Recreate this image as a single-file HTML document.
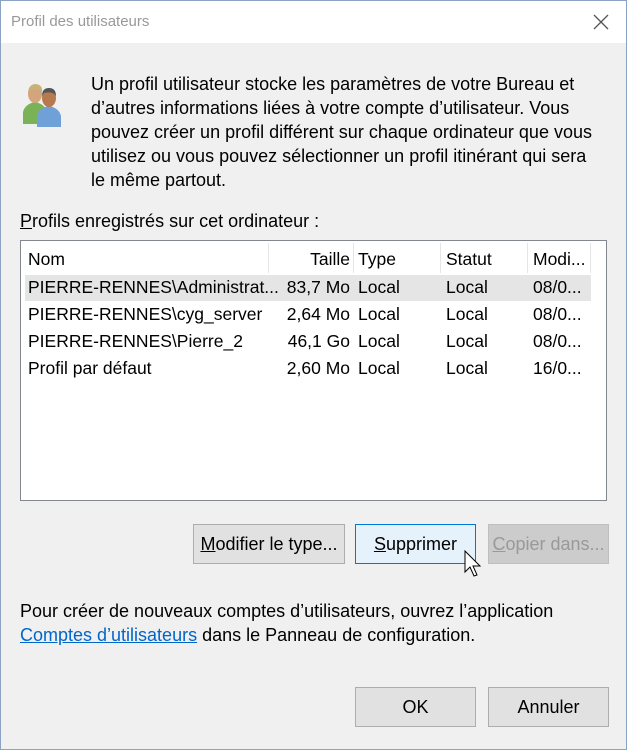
<!DOCTYPE html>
<html><head><meta charset="utf-8"><style>
*{margin:0;padding:0;box-sizing:border-box}
body{width:627px;height:750px;overflow:hidden;background:#f0f0f0;font-family:"Liberation Sans",sans-serif;font-size:18px;color:#000;position:relative}
.win{position:absolute;left:0;top:0;width:627px;height:750px;border:1px solid #8aa3c4}
.title{position:absolute;left:1px;top:1px;width:625px;height:42px;background:#fff}
.t{position:absolute;white-space:nowrap}
.btn{position:absolute;height:40px;border:1px solid #adadad;background:#e1e1e1;text-align:center;line-height:38px}
.lst{position:absolute;left:20px;top:240px;width:587px;height:261px;background:#fff;border:1px solid #828790}
.hd{position:absolute;top:247px;height:24px;line-height:24px}
.sep{position:absolute;top:243px;height:30px;width:1px;background:#e5e5e5}
.r{font-size:17.5px}
u{text-decoration:underline}
</style></head><body>
<div class="win"></div>
<div class="title"></div>
<div class="t" style="left:11px;top:13px;color:#999;font-size:15px">Profil des utilisateurs</div>
<svg style="position:absolute;left:593px;top:14px" width="16" height="16"><path d="M1 1L15 15M15 1L1 15" stroke="#555" stroke-width="1.3"/></svg>
<svg style="position:absolute;left:19px;top:80px" width="50" height="48">
<path d="M4 32 Q6 24 16 22 Q26 24 28 32 L28 44 L4 44Z" fill="#7ab257"/>
<ellipse cx="16" cy="14" rx="7" ry="9" fill="#d4a57c"/>
<path d="M9 12 Q10 4 17 4 Q24 5 23 12 Q20 8 12 10Z" fill="#c9b27a"/>
<path d="M18 36 Q20 28 30 26 Q40 28 42 36 L42 47 L18 47Z" fill="#6fa0d8"/>
<ellipse cx="30" cy="18" rx="7" ry="9" fill="#b67a4e"/>
<path d="M23 16 Q23 8 30 8 Q37 8 37 16 Q34 11 25 13Z" fill="#555"/>
</svg>
<div class="t" style="left:91px;top:72px;line-height:24px">Un profil utilisateur stocke les paramètres de votre Bureau et<br>d’autres informations liées à votre compte d’utilisateur. Vous<br>pouvez créer un profil différent sur chaque ordinateur que vous<br>utilisez ou vous pouvez sélectionner un profil itinérant qui sera<br>le même partout.</div>
<div class="t" style="left:20px;top:211px"><u>P</u>rofils enregistrés sur cet ordinateur :</div>
<div class="lst"></div>
<div class="sep" style="left:268px"></div><div class="sep" style="left:353px"></div><div class="sep" style="left:440px"></div><div class="sep" style="left:527px"></div><div class="sep" style="left:590px"></div>
<div class="hd r" style="left:28px">Nom</div>
<div class="hd r" style="left:268px;width:82px;text-align:right">Taille</div>
<div class="hd r" style="left:358px">Type</div>
<div class="hd r" style="left:446px">Statut</div>
<div class="hd r" style="left:533px">Modi...</div>
<div style="position:absolute;left:25px;top:275px;width:566px;height:26px;background:#e5e5e5"></div>
<div class="t r" style="left:28px;top:274px;line-height:27px">PIERRE-RENNES\Administrat...<br>PIERRE-RENNES\cyg_server<br>PIERRE-RENNES\Pierre_2<br>Profil par défaut</div>
<div class="t r" style="left:258px;width:92px;text-align:right;top:274px;line-height:27px">83,7 Mo<br>2,64 Mo<br>46,1 Go<br>2,60 Mo</div>
<div class="t r" style="left:358px;top:274px;line-height:27px">Local<br>Local<br>Local<br>Local</div>
<div class="t r" style="left:446px;top:274px;line-height:27px">Local<br>Local<br>Local<br>Local</div>
<div class="t r" style="left:533px;top:274px;line-height:27px">08/0...<br>08/0...<br>08/0...<br>16/0...</div>
<div class="btn" style="left:193px;top:524px;width:152px"><u>M</u>odifier le type...</div>
<div class="btn" style="left:355px;top:524px;width:121px;background:#e5f1fb;border-color:#0078d7"><u>S</u>upprimer</div>
<div class="btn" style="left:488px;top:524px;width:121px;background:#cccccc;border-color:#bfbfbf;color:#999"><u>C</u>opier dans...</div>
<svg style="position:absolute;left:464px;top:550px" width="20" height="30"><path d="M1 1L1 22L6 17L10 26L13 25L9 16L16 16Z" fill="#fff" stroke="#000" stroke-width="1"/></svg>
<div class="t" style="left:20px;top:599px;line-height:24px">Pour créer de nouveaux comptes d’utilisateurs, ouvrez l’application<br><span style="color:#0066cc;text-decoration:underline">Comptes d’utilisateurs</span> dans le Panneau de configuration.</div>
<div class="btn" style="left:355px;top:687px;width:121px">OK</div>
<div class="btn" style="left:488px;top:687px;width:121px">Annuler</div>
</body></html>
